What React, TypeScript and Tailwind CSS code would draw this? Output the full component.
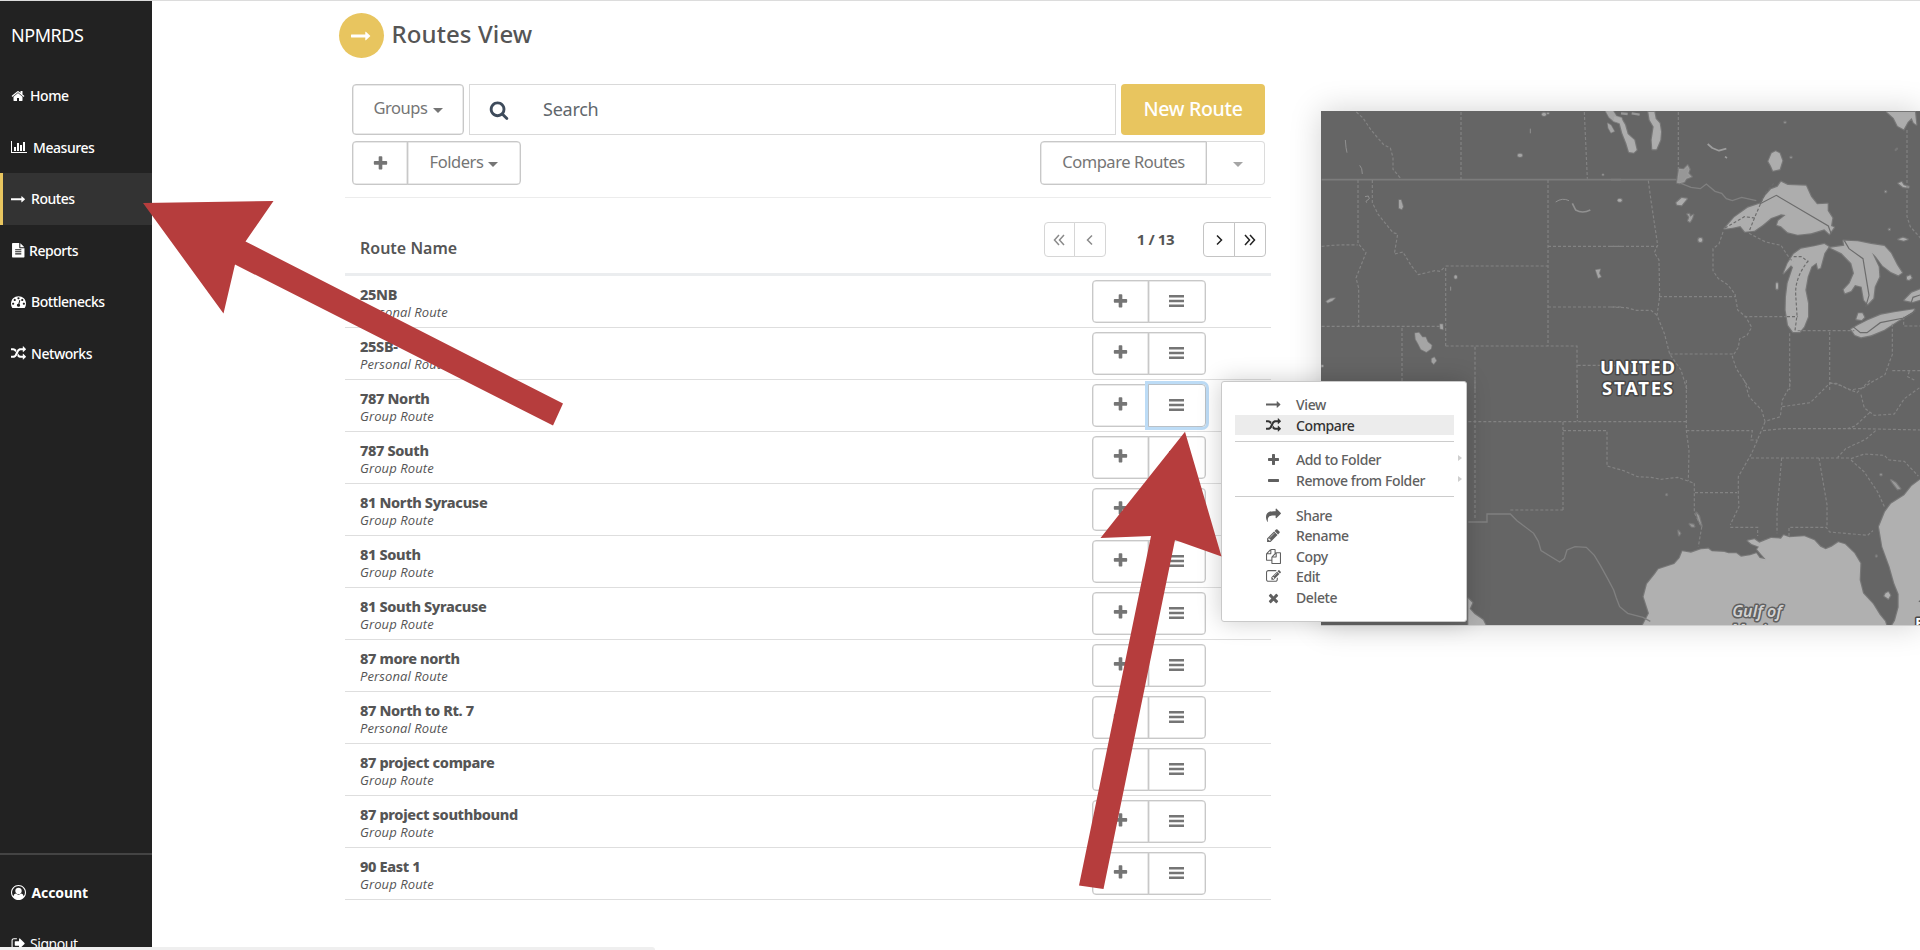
type IconDef = { w: number; d: string };

const ICONS = {
  home: { w: 1792, d: "M1472 992v480q0 26-19 45t-45 19h-384v-384h-256v384h-384q-26 0-45-19t-19-45v-480q0-1 .5-3t.5-3l575-474 575 474q1 2 1 6zm223-69l-62 74q-8 9-21 11h-3q-13 0-21-7l-692-577-692 577q-12 8-24 7-13-2-21-11l-62-74q-8-10-7-23.5t11-21.5l719-599q32-26 76-26t76 26l244 204v-195q0-14 9-23t23-9h192q14 0 23 9t9 23v408l219 182q10 8 11 21.5t-7 23.5z" },
  chart: { w: 2048, d: "M640 896v512h-256v-512h256zm384-512v1024h-256v-1024h256zm1024 1152v128h-2048v-1536h128v1408h1920zm-640-896v768h-256v-768h256zm384-384v1152h-256v-1152h256z" },
  arrow: { w: 1792, d: "M1728 893q0 14-10 24l-384 354q-16 14-35 6-19-9-19-29v-224h-1248q-14 0-23-9t-9-23v-192q0-14 9-23t23-9h1248v-224q0-21 19-29t35 5l384 350q10 10 10 23z" },
  file: { w: 1792, d: "M1596 476q14 14 28 36h-472v-472q22 14 36 28zm-476 164h544v1056q0 40-28 68t-68 28h-1344q-40 0-68-28t-28-68v-1600q0-40 28-68t68-28h800v544q0 40 28 68t68 28zm160 736v-64q0-14-9-23t-23-9h-704q-14 0-23 9t-9 23v64q0 14 9 23t23 9h704q14 0 23-9t9-23zm0-256v-64q0-14-9-23t-23-9h-704q-14 0-23 9t-9 23v64q0 14 9 23t23 9h704q14 0 23-9t9-23zm0-256v-64q0-14-9-23t-23-9h-704q-14 0-23 9t-9 23v64q0 14 9 23t23 9h704q14 0 23-9t9-23z" },
  gauge: { w: 1792, d: "M384 1152q0-53-37.5-90.5t-90.5-37.5-90.5 37.5-37.5 90.5 37.5 90.5 90.5 37.5 90.5-37.5 37.5-90.5zm192-448q0-53-37.5-90.5t-90.5-37.5-90.5 37.5-37.5 90.5 37.5 90.5 90.5 37.5 90.5-37.5 37.5-90.5zm428 481l101-382q6-26-7.5-48.5t-38.5-29.5-48 6.5-30 39.5l-101 382q-60 5-107 43.5t-63 98.5q-20 77 20 146t117 89 146-20 89-117q16-60-6-117t-72-91zm660-33q0-53-37.5-90.5t-90.5-37.5-90.5 37.5-37.5 90.5 37.5 90.5 90.5 37.5 90.5-37.5 37.5-90.5zm-640-640q0-53-37.5-90.5t-90.5-37.5-90.5 37.5-37.5 90.5 37.5 90.5 90.5 37.5 90.5-37.5 37.5-90.5zm448 192q0-53-37.5-90.5t-90.5-37.5-90.5 37.5-37.5 90.5 37.5 90.5 90.5 37.5 90.5-37.5 37.5-90.5zm320 448q0 261-141 483-19 29-54 29h-1402q-35 0-54-29-141-221-141-483 0-182 71-348t191-286 286-191 348-71 348 71 286 191 191 286 71 348z" },
  shuffle: { w: 1792, d: "M666 481q-60 92-137 273-22-45-37-72.5t-40.5-63.5-51-56.5-63-35-81.5-14.5h-224q-14 0-23-9t-9-23v-192q0-14 9-23t23-9h224q250 0 410 225zm1126 799q0 14-9 23l-320 320q-9 9-23 9-13 0-22.5-9.5t-9.5-22.5v-192q-32 0-85 .5t-81 1-73-1-71-5-64-10.5-63-18.5-58-28.5-59-40-55-53.5-56-69.5q59-93 136-273 22 45 37 72.5t40.5 63.5 51 56.5 63 35 81.5 14.5h256v-192q0-14 9-23t23-9q12 0 24 10l319 319q9 9 9 23zm0-896q0 14-9 23l-320 320q-9 9-23 9-13 0-22.5-9.5t-9.5-22.5v-192h-256q-48 0-87 15t-69 45-51 61.5-45 77.5q-32 62-78 171-29 66-49.5 111t-54 105-64 100-74 83-90 68.5-106.5 42-128 16.5h-224q-14 0-23-9t-9-23v-192q0-14 9-23t23-9h224q48 0 87-15t69-45 51-61.5 45-77.5q32-62 78-171 29-66 49.5-111t54-105 64-100 74-83 90-68.5 106.5-42 128-16.5h256v-192q0-14 9-23t23-9q12 0 24 10l319 319q9 9 9 23z" },
  search: { w: 1792, d: "M1216 832q0-185-131.5-316.5t-316.5-131.5-316.5 131.5-131.5 316.5 131.5 316.5 316.5 131.5 316.5-131.5 131.5-316.5zm512 832q0 52-38 90t-90 38q-54 0-90-38l-343-342q-179 124-399 124-143 0-273.5-55.5t-225-150-150-225-55.5-273.5 55.5-273.5 150-225 225-150 273.5-55.5 273.5 55.5 225 150 150 225 55.5 273.5q0 220-124 399l343 343q37 37 37 90z" },
  plus: { w: 1792, d: "M1600 736v192q0 40-28 68t-68 28h-416v416q0 40-28 68t-68 28h-192q-40 0-68-28t-28-68v-416h-416q-40 0-68-28t-28-68v-192q0-40 28-68t68-28h416v-416q0-40 28-68t68-28h192q40 0 68 28t28 68v416h416q40 0 68 28t28 68z" },
  minus: { w: 1792, d: "M1600 736v192q0 40-28 68t-68 28h-1216q-40 0-68-28t-28-68v-192q0-40 28-68t68-28h1216q40 0 68 28t28 68z" },
  share: { w: 1792, d: "M1792 640q0 26-19 45l-512 512q-19 19-45 19t-45-19-19-45v-256h-224q-98 0-175.5 6t-154 21.5-133 42.5-105.5 69.5-80 101-48.5 138.5-17.5 181q0 55 5 123 0 6 2.5 23.5t2.5 26.5q0 15-8.5 25t-23.5 10q-16 0-28-17-7-9-13-22t-13.5-30-10.5-24q-127-285-127-451 0-199 53-333 162-403 875-403h224v-256q0-26 19-45t45-19 45 19l512 512q19 19 19 45z" },
  pencil: { w: 1792, d: "M491 1536l91-91-235-235-91 91v107h128v128h107zm523-928q0-22-22-22-10 0-17 7l-542 542q-7 7-7 17 0 22 22 22 10 0 17-7l542-542q7-7 7-17zm-54-192l416 416-832 832h-416v-416zm683 96q0 53-37 90l-166 166-416-416 166-165q36-38 90-38 53 0 91 38l235 234q37 39 37 91z" },
  copy: { w: 1792, d: "M1696 384q40 0 68 28t28 68v1216q0 40-28 68t-68 28h-960q-40 0-68-28t-28-68v-288h-544q-40 0-68-28t-28-68v-672q0-40 20-88t48-76l408-408q28-28 76-48t88-20h416q40 0 68 28t28 68v328q68-40 128-40h416zm-544 213l-299 299h299v-299zm-640-384l-299 299h299v-299zm196 647l316-316v-416h-384v416q0 40-28 68t-68 28h-416v640h512v-256q0-40 20-88t48-76zm956 804v-1152h-384v416q0 40-28 68t-68 28h-416v640h896z" },
  edit: { w: 1792, d: "M888 1184l116-116-152-152-116 116v56h96v96h56zm440-720q-16-16-33 1l-350 350q-17 17-1 33t33-1l350-350q17-17 1-33zm80 594v190q0 119-84.5 203.5t-203.5 84.5h-832q-119 0-203.5-84.5t-84.5-203.5v-832q0-119 84.5-203.5t203.5-84.5h832q63 0 117 25 15 7 18 23 3 17-9 29l-49 49q-14 14-32 8-23-6-45-6h-832q-66 0-113 47t-47 113v832q0 66 47 113t113 47h832q66 0 113-47t47-113v-126q0-13 9-22l64-64q15-15 35-7t20 29zm-96-738l288 288-672 672h-288v-288zm444 132l-92 92-288-288 92-92q28-28 68-28t68 28l152 152q28 28 28 68t-28 68z" },
  times: { w: 1792, d: "M1490 1322q0 40-28 68l-136 136q-28 28-68 28t-68-28l-294-294-294 294q-28 28-68 28t-68-28l-136-136q-28-28-28-68t28-68l294-294-294-294q-28-28-28-68t28-68l136-136q28-28 68-28t68 28l294 294 294-294q28-28 68-28t68 28l136 136q28 28 28 68t-28 68l-294 294 294 294q28 28 28 68z" },
  user: { w: 1792, d: "M896 0q182 0 348 71t286 191 191 286 71 348q0 181-70.5 347t-190.5 286-286 191.5-349 71.5-349-71-285.5-191.5-190.5-286-71-347.5 71-348 191-286 286-191 348-71zm619 1351q149-205 149-455 0-156-61-298t-164-245-245-164-298-61-298 61-245 164-164 245-61 298q0 250 149 455 66-327 306-327 131 128 313 128t313-128q240 0 306 327zm-235-647q0-159-112.5-271.5t-271.5-112.5-271.5 112.5-112.5 271.5 112.5 271.5 271.5 112.5 271.5-112.5 112.5-271.5z" },
  signout: { w: 1792, d: "M704 1440q0 4 1 20t.5 26.5-3 23.5-10 19.5-20.5 6.5h-320q-119 0-203.5-84.5t-84.5-203.5v-704q0-119 84.5-203.5t203.5-84.5h320q13 0 22.5 9.5t9.5 22.5q0 4 1 20t.5 26.5-3 23.5-10 19.5-20.5 6.5h-320q-66 0-113 47t-47 113v704q0 66 47 113t113 47h312l11.5 1 11.5 3 8 5.5 7 9 2 13.5zm928-544q0 26-19 45l-544 544q-19 19-45 19t-45-19-19-45v-288h-448q-26 0-45-19t-19-45v-384q0-26 19-45t45-19h448v-288q0-26 19-45t45-19 45 19l544 544q19 19 19 45z" },
} satisfies Record<string, IconDef>;

type IconName = keyof typeof ICONS;

function Icon({ name, className }: { name: IconName; className: string }) {
  const { w, d } = ICONS[name];
  return (
    <svg viewBox={`0 0 ${w} 1792`} className={`shrink-0 fill-current ${className}`}>
      <path d={d} />
    </svg>
  );
}

function Caret({ className }: { className: string }) {
  return (
    <svg viewBox="0 0 10 5" className={`h-[5px] w-[10px] shrink-0 fill-current ${className}`}>
      <path d="M0 0h10L5 5z" />
    </svg>
  );
}

function Chevron({ d }: { d: string }) {
  return (
    <svg viewBox="0 0 12 12" className="h-3 w-3 fill-none stroke-current stroke-[1.5]">
      <path d={d} />
    </svg>
  );
}

type Nav = { icon: IconName; label: string; size: string; gap: string; active?: boolean };

const NAV: Nav[] = [
  { icon: "home", label: "Home", size: "w-[14px] h-[14px]", gap: "gap-[5px]" },
  { icon: "chart", label: "Measures", size: "w-[16px] h-[14px]", gap: "gap-[6px]" },
  { icon: "arrow", label: "Routes", size: "w-[14.5px] h-[14.5px]", gap: "gap-[5.5px]", active: true },
  { icon: "file", label: "Reports", size: "w-[14.5px] h-[14.5px]", gap: "gap-[3.5px]" },
  { icon: "gauge", label: "Bottlenecks", size: "w-[15px] h-[15px]", gap: "gap-[5px]" },
  { icon: "shuffle", label: "Networks", size: "w-[15px] h-[15px]", gap: "gap-[5px]" },
];

const ROUTES = [
  ["25NB", "Personal Route"],
  ["25SB-", "Personal Route"],
  ["787 North", "Group Route"],
  ["787 South", "Group Route"],
  ["81 North Syracuse", "Group Route"],
  ["81 South", "Group Route"],
  ["81 South Syracuse", "Group Route"],
  ["87 more north", "Personal Route"],
  ["87 North to Rt. 7", "Personal Route"],
  ["87 project compare", "Group Route"],
  ["87 project southbound", "Group Route"],
  ["90 East 1", "Group Route"],
];

type MenuEntry = { icon: IconName; label: string; active?: boolean; sub?: boolean };

const MENU: MenuEntry[][] = [
  [
    { icon: "arrow", label: "View" },
    { icon: "shuffle", label: "Compare", active: true },
  ],
  [
    { icon: "plus", label: "Add to Folder", sub: true },
    { icon: "minus", label: "Remove from Folder", sub: true },
  ],
  [
    { icon: "share", label: "Share" },
    { icon: "pencil", label: "Rename" },
    { icon: "copy", label: "Copy" },
    { icon: "edit", label: "Edit" },
    { icon: "times", label: "Delete" },
  ],
];

function Sidebar() {
  return (
    <aside className="flex h-[947px] w-[152px] shrink-0 flex-col overflow-hidden bg-[#222] text-[14px] font-medium tracking-[-0.45px] text-white">
      <div className="flex h-[69px] items-center pl-[11px] text-[18px] font-normal">NPMRDS</div>
      <nav className="flex flex-col">
        {NAV.map((n) => (
          <a
            key={n.label}
            className={
              n.active
                ? `flex h-[51.5px] items-center border-l-[3px] border-[#e8c55f] bg-[#333] pl-[8px] ${n.gap}`
                : `flex h-[51.5px] items-center pl-[11px] ${n.gap}`
            }
          >
            <Icon name={n.icon} className={n.size} />
            <span>{n.label}</span>
          </a>
        ))}
      </nav>
      <div className="mt-auto h-[95px] shrink-0 border-t-2 border-[#444]">
        <a className="flex h-[75px] items-center gap-[5.5px] pl-[11px] font-bold tracking-[-0.1px]">
          <Icon name="user" className="h-[15px] w-[15px]" />
          <span>Account</span>
        </a>
        <a className="flex h-[26px] items-center gap-[4px] pl-[11px] font-normal">
          <Icon name="signout" className="h-[15px] w-[15px]" />
          <span>Signout</span>
        </a>
      </div>
    </aside>
  );
}

const halfLeft = "flex h-full items-center justify-center rounded-l-[4px] border border-[#c8c8c8] shadow-[inset_0_0_0_0.5px_#d4d4d4] text-[#757575]";
const halfRight = "-ml-px flex h-full items-center justify-center rounded-r-[4px] border border-[#c8c8c8] shadow-[inset_0_0_0_0.5px_#d4d4d4] text-[#757575]";

function Toolbar() {
  return (
    <div className="flex flex-col gap-[6px] pr-[6px] pl-[7px] text-[16.5px] tracking-[-0.45px] text-[#757575]">
      <div className="flex h-[51px]">
        <button className="flex w-[112px] items-center justify-center gap-[5px] rounded-[4px] border border-[#c8c8c8] pb-[2px] shadow-[inset_0_0_0_0.5px_#d4d4d4]">
          Groups <Caret className="mt-[4px]" />
        </button>
        <div className="ml-[5px] flex w-[647px] items-center border border-[#d9d9d9] pb-[1px] pl-[19px] text-[18px] tracking-[-0.25px] text-[#5f676c]">
          <Icon name="search" className="mt-[2px] h-[20px] w-[20px] text-[#3e4b5b]" />
          <span className="ml-[34px]">Search</span>
        </div>
        <button className="ml-[5px] flex w-[144px] items-center justify-center rounded-[4px] bg-[#e8c55f] pb-[2px] text-[19.5px] font-medium tracking-[-0.3px] text-white">
          New Route
        </button>
      </div>
      <div className="flex h-[44px] justify-between">
        <div className="flex">
          <button className={`w-[56px] ${halfLeft}`}>
            <Icon name="plus" className="h-[17px] w-[17px]" />
          </button>
          <button className={`w-[114px] gap-[5px] pb-[2px] ${halfRight}`}>
            Folders <Caret className="mt-[4px]" />
          </button>
        </div>
        <div className="flex">
          <button className={`w-[167px] pb-[2px] ${halfLeft}`}>Compare Routes</button>
          <button className="flex h-full w-[58px] items-center justify-center rounded-r-[4px] border border-l-0 border-[#dcdcdc] text-[#a5a5a5]">
            <Caret className="mt-[2px] ml-1" />
          </button>
        </div>
      </div>
    </div>
  );
}

function Pager() {
  return (
    <div className="flex h-[35px] items-center">
      <div className="flex h-full text-[#8a8a8a]">
        <span className="flex w-[31.5px] items-center justify-center rounded-l-[4px] border border-[#d6d6d6]">
          <Chevron d="M6 1L1.500 6L6 11M11 1L6.500 6L11 11" />
        </span>
        <span className="-ml-px flex w-[32px] items-center justify-center rounded-r-[4px] border border-[#d6d6d6]">
          <Chevron d="M8 1.500L3.500 6L8 10.500" />
        </span>
      </div>
      <span className="w-[97px] pl-[2px] text-center text-[15px] font-bold tracking-[-0.4px] text-[#555]">1 / 13</span>
      <div className="flex h-full text-[#222]">
        <span className="flex w-[32px] items-center justify-center rounded-l-[4px] border border-[#c4c4c4]">
          <Chevron d="M4 1.500L8.500 6L4 10.500" />
        </span>
        <span className="-ml-px flex w-[32px] items-center justify-center rounded-r-[4px] border border-[#c4c4c4]">
          <Chevron d="M1 1L5.500 6L1 11M6 1L10.500 6L6 11" />
        </span>
      </div>
    </div>
  );
}

function RouteTable() {
  return (
    <div className="mt-[12px] border-t border-[#ececec]">
      <div className="flex h-[78px] items-start justify-between border-b-[3px] border-[#ebedef] pt-[24px] pr-[5px] pl-[15px]">
        <span className="mt-[14px] text-[16px] leading-[24px] font-semibold text-[#555]">Route Name</span>
        <Pager />
      </div>
      {ROUTES.map(([name, kind], i) => (
        <div key={name} className="flex h-[51.970px] items-start justify-between border-b border-[#dedede] pr-[65px] pl-[15px]">
          <div className="pt-[9px]">
            <div className="text-[14.500px] leading-[19px] font-extrabold tracking-[-0.35px] text-[#555]">{name}</div>
            <div className="font-['Open_Sans',sans-serif] text-[13px] leading-[16px] tracking-[0.1px] text-[#555] italic">{kind}</div>
          </div>
          <div className="flex h-[43px] translate-y-[4px]">
            <button className={`w-[57px] pb-[1px] ${halfLeft}`}>
              <Icon name="plus" className="h-[17px] w-[17px]" />
            </button>
            <button
              className={
                i === 2
                  ? "-ml-px flex h-full w-[58px] items-center justify-center rounded-r-[4px] border border-[#b9c0c6] pr-[2px] pb-[1px] text-[#757575] shadow-[0_0_0_3px_#bddcf6]"
                  : `w-[58px] pr-[2px] pb-[1px] ${halfRight}`
              }
            >
              <svg viewBox="0 0 15 12" className="h-[12px] w-[15px] fill-current">
                <path d="M0 0h15v2.400H0zM0 4.800h15v2.400H0zM0 9.600h15v2.400H0z" />
              </svg>
            </button>
          </div>
        </div>
      ))}
    </div>
  );
}

function ContextMenu() {
  return (
    <div className="absolute top-[380px] left-[1221px] h-[241px] w-[245.5px] rounded-[3px] border border-[#c9c9c9] bg-white pt-[12px] pr-[12px] pl-[13px] text-[14px] font-medium tracking-[-0.38px] text-[#606060] shadow-[0_0_24px_rgba(0,0,0,0.2)]">
      {MENU.map((group, g) => (
        <div key={g} className={g === 0 ? "" : "mt-[6px] border-t-[1.500px] border-[#ccc] pt-[7px]"}>
          {group.map((m) => (
            <div
              key={m.label}
              className={
                m.active
                  ? "flex h-[20.600px] items-center bg-[#ececec] pt-[1px] pl-[31px] text-[#333]"
                  : "relative flex h-[20.600px] items-center pt-[1px] pl-[31px]"
              }
            >
              <Icon name={m.icon} className={m.icon === "plus" || m.icon === "minus" || m.icon === "times" ? "h-[14px] w-[15px]" : "h-[15px] w-[15px]"} />
              <span className="ml-[15px]">{m.label}</span>
              {m.sub && (
                <svg viewBox="0 0 4 6" className="absolute top-[6px] -right-[8px] h-[6px] w-[4px] fill-[#cfcfcf]">
                  <path d="M0 0L4 3L0 6z" />
                </svg>
              )}
            </div>
          ))}
        </div>
      ))}
    </div>
  );
}

function RouteMap() {
  return (
    <div className="mt-[110px] ml-[49.500px] h-[515px] w-[600px] shrink-0 shadow-[0_0_30px_rgba(0,0,0,0.18)]">
      <svg viewBox="0 0 600 515" className="h-[515px] w-[600px] bg-[#656565]">
        <g transform="translate(-10 -21) scale(.33333)">
          <g fill="#a5a5a5" stroke="#a5a5a5" strokeOpacity=".3" strokeWidth="5" strokeLinejoin="round">
            <path d="M312 730l12-2 10 14 10 0 6 14 12 10-2 10-14 10-16-8-8-16-8-14z" />
            <path d="M362 806l8-4 6 10-8 10-6-6z" />
            <ellipse cx="627" cy="196" rx="7" ry="5" />
            <ellipse cx="699" cy="73" rx="6" ry="5" />
            <ellipse cx="711" cy="70" rx="3" ry="2" />
            <ellipse cx="434" cy="561" rx="4" ry="5" />
            <path d="M264 330l6 0 6 20-4 8-8-4z" />
            <path d="M854 540l14-2-4 12 6 10-8 4-4-12z" />
            <path d="M46 634l12-8 14-2-8 8-14 6z" />
            <path d="M387 703l8 0 1 15-8-2z" />
            <circle cx="876" cy="254" r="2" />
            <circle cx="924" cy="331" r="4" />
            <path d="M884 64l10 18 14 12 24 6v-16l-16-6-10-16zM890 100l10 6 10 18-10 4-8-14z" />
            <circle cx="34" cy="828" r="3" />
          </g>
          <g fill="none" stroke="#919191" strokeWidth="3">
            <path d="M103 150l2 22 3 16M146 226l6 10 2 16M162 320l10-2 3 8-10 8 2 4M658 116v14M734 336q20-14 40-4M419 590v12" />
            <path d="M784 340l10 20q20 12 44 0" strokeWidth="5" />
          </g>
          <path d="M32 269H930" stroke="#7c7c7c" strokeWidth="5" />
          <g fill="none" stroke="#838383" strokeWidth="3.500" strokeDasharray="9 6">
            <path d="M136 66l20 18 24 36 38 44 20 10 8 28 0 36 22 26" />
            <path d="M450 66V269M820 66l9 200M141 270V460l24 28-30 76 8 30V708M184 270v68l18 36 44 54 14 4-10 60 26-6 24 40 22 28 50-12 16 2 14-14" />
            <path d="M32 469q50-6 108-4M32 709H390M404 768V528H711M711 270V768M404 768H798V900M711 469H930M711 651H930M273 714V900M492 770V900M800 826H930" />
          </g>
        </g>

        <g transform="translate(290 -21) scale(.33333)">
          <g fill="#adadad" stroke="#adadad" strokeOpacity=".25" strokeWidth="7" strokeLinejoin="round">
            <path d="M10 80L30 84L42 104L50 132L70 150L77 180L68 188L54 186L46 160L34 130L26 100L8 92z" />
            <path d="M112 66L130 66L134 86L146 100L150 125L148 150L136 178L124 178L122 150L128 110L116 90z" />
            <path d="M30 70L50 72M62 70L86 74" fill="none" strokeOpacity=".7" />
            <path d="M200 262l4-26 14 2 12-12 6 12-4 12 10 10-16 6-6 10-14 4-8-2z" fillOpacity=".7" />
            <path d="M196 338l16-14 16 2-10 12-6 8-14-2z" />
            <path d="M229 372l6 0 2 8 10-6-4 12-6 10-6-4 4-10z" fillOpacity=".8" />
            <circle cx="268" cy="450" r="6" />
            <circle cx="28" cy="331" r="4" />
            <path d="M472 214L482 190L494 184L506 190L514 212L506 238L486 242L480 228z" />
            <path d="M290 162l14 12 20 8 22-6M342 200l6 4" fill="none" strokeOpacity=".8" strokeWidth="5" />
            <path d="M340 416L370 382L410 353L450 340L462 318L480 298L500 290L510 275L530 285L585 287L600 320L618 343L650 341L650 362L664 384L660 408L669 412L655 432L640 418L600 430L560 434L530 427L510 409L498 405L502 392L524 375L510 373L480 384L455 405L430 422L402 425L388 408L365 413z" />
            <path d="M518 550L530 520L548 492L570 476L610 469L640 462L653 470L640 490L628 534L621 536L617 518L601 530L590 560L583 600L591 640L591 680L579 710L566 726L546 726L531 705L524 660L525 620L530 580L546 532L540 526z" />
            <path d="M658 473L700 467L697 452L740 454L780 462L820 468L840 490L858 525L873 548L862 556L840 546L815 527L795 500L783 488L803 530L805 560L791 590L787 625L770 643L759 630L752 590L732 585L720 603L702 610L698 599L716 580L729 550L721 520L692 490z" />
            <path d="M742 670l12 0 6 12-8 8-16-2zM888 560l10-4 4 8-8 6-6-2z" />
            <path d="M720 718L742 705L770 691L810 674L850 667L910 658L903 668L860 693L820 719L780 736L750 742L732 735z" />
            <path d="M880 631L902 608L932 597L932 628L905 636z" />
            <path d="M828 66L912 66L916 104L908 98L902 84L890 96L878 118L860 108L848 84z" />
            <path d="M862 280l10-4 6 10 16 4-2 3-16-2zM862 448l14-5 14 5-12 4zM854 180l4-4z" />
            <ellipse cx="498" cy="588" rx="3" ry="10" />
            <circle cx="522" cy="97" r="2" />
            <circle cx="540" cy="202" r="2" />
            <circle cx="835" cy="418" r="2" />
            <circle cx="824" cy="305" r="2" />
          </g>
          <path d="M0 269H196" stroke="#7c7c7c" strokeWidth="5" />
          <path d="M210 280l30 12 28 4 18-14 26 22 20 6 14 16 18 6 28-10 44 10" fill="none" stroke="#808080" strokeWidth="4" />
          <g fill="none" stroke="#838383" strokeWidth="3.500" strokeDasharray="9 6">
            <path d="M202 66V240M112 272L120 332L132 412L140 466L130 488L144 510L146 620L138 676L160 730L176 792L210 840L228 900" />
            <path d="M0 469H138M144 620H372M0 651l46 2 30 8 44 0 20 16M176 792H366M336 426L324 462L306 476L306 542L322 566L350 584L372 612L380 660L404 680L422 712L408 736L386 746L382 772L364 800L376 836L418 900M400 680H524M414 430L464 456L510 466L528 494L546 516M560 722H730M536 730V900M656 726V900M656 880l20 0 40 20 40-6 30-20 36-20 14-40 8-20V700M844 842H930M878 680v28H930M888 120V380l10 30 32 36M910 870l-20-10 6-20" />
          </g>
          <g fill="none" stroke="#6c6c6c" strokeWidth="3.500">
            <path d="M446 342L496 316L652 408L660 430M700 452L714 476L756 506L774 616L764 650M726 710L748 728L768 728L808 698L878 684L914 662M900 640l6-18 24-8" />
            <path d="M342 414L400 380L432 384M416 420L432 380L462 310L492 276M592 512Q552 562 554 612L558 676L552 722M528 680h32M548 500l24 0 20 16" strokeDasharray="9 6" />
          </g>
        </g>

        <g transform="translate(140 269) scale(.33333)">
          <g fill="#b0b0b0" stroke="#b0b0b0" strokeOpacity=".25" strokeWidth="7" strokeLinejoin="round">
            <path d="M542 742L564 700L548 650L558 612L582 582L592 568L640 552L656 534L664 514L690 518L720 508L742 506L752 514L790 516L802 520L826 520L840 530L868 526L886 520L896 534L914 538L900 522L888 508L894 500L872 492L860 482L880 478L895 488L930 474L960 476L968 466L985 472L1030 469L1060 481L1078 500L1094 508L1112 500L1132 487L1152 493L1180 520L1198 550L1196 600L1206 640L1236 672L1256 704L1272 724L1278 742z" />
            <path d="M1390 290L1352 318L1330 346L1290 371L1272 396L1254 440L1264 500L1286 560L1300 610L1313 642L1313 682L1302 722L1290 742L1390 742z" />
            <path d="M22 656l12 12-8 18 14 16 26 18 10 20H22z" />
            <path d="M1274 640l8-4 6 10-6 10-12-8z" />
            <path d="M686 432l12 2 2 6-8 0zM706 398l8 10 8 30-10-18zM652 452l6 8-4 6zM1290 300l14 8 14 18-8 2-14-18z" fillOpacity=".6" />
            <circle cx="617" cy="344" r="1.500" />
            <circle cx="1260" cy="284" r="2" />
            <circle cx="1246" cy="528" r="1.500" />
          </g>
          <path d="M1384 656l-12 8 12 6z" fill="#656565" />
          <path d="M22 426h56v-24h70l20 20 50 38 14 24 8 28 56 34 14-10 8-26 24-10 34 2 24 24 18 30 22 40 18 34 8 24 10 26 24 20 46 12 22 12" fill="none" stroke="#808080" strokeWidth="4" />
          <g fill="none" stroke="#838383" strokeWidth="3.500" strokeDasharray="9 6">
            <path d="M42 0V420M349 0V124M22 125H676M676 0V152L684 212L682 302M306 126V390M306 152H438V258L488 272L530 290L570 292L600 298L650 292L700 310M148 390H306M676 152H874l-4 28h20M870 234H1170M700 310V398L722 442L712 500M702 338H828M912 126L902 150L872 220L832 290L832 350L834 380L808 434M808 442H890v26M962 234L948 394V460M1074 234L1098 374V440M984 468V442H1096L1106 456L1220 466L1236 452M906 152L966 146L1200 146L1380 150M850 0L864 50L902 90L912 124L958 110L964 60L986 20L988 0M964 80L1048 68L1108 8L1138 16L1188 38L1228 0M1200 44L1210 84L1240 106L1300 102L1330 56L1380 20M1226 98L1182 138L1160 146M1244 152L1214 178L1154 206L1130 232M1170 236L1210 222L1270 226L1284 240L1330 244L1372 288M1170 240L1210 276L1250 336L1270 380" />
          </g>
        </g>

        <g className="font-['Noto_Sans',sans-serif]" textAnchor="middle" paintOrder="stroke" strokeLinejoin="round">
          <g className="fill-white stroke-[#484848] text-[18.500px] font-bold" strokeWidth="3">
            <text x="316.500" y="262.500" textLength="75">UNITED</text>
            <text x="316.500" y="283.500" textLength="71">STATES</text>
          </g>
          <g className="fill-[#d2d2d2] stroke-[#606060] text-[16px] font-semibold italic" strokeWidth="3">
            <text x="436" y="506">Gulf of</text>
            <text x="436" y="525">Mexico</text>
          </g>
          <text x="599" y="517" className="fill-white stroke-[#484848] text-[14px] font-bold" strokeWidth="3">B</text>
        </g>
        <path d="M0 514.500H600" stroke="#cfcfcf" />
      </svg>
    </div>
  );
}

export default function App() {
  return (
    <div className="relative flex h-[950px] w-[1920px] overflow-hidden border-t border-[#dcdcdc] bg-white font-['Noto_Sans',sans-serif]">
      <Sidebar />
      <main className="flex">
        <section className="ml-[193px] w-[926px]">
          <header className="-ml-[6.500px] flex h-[83px] items-start gap-[8px] pt-[12px]">
            <span className="flex h-[45px] w-[45px] items-center justify-center rounded-full bg-[#e8c55f] text-white">
              <Icon name="arrow" className="h-[20px] w-[20px]" />
            </span>
            <h1 className="text-[24px] leading-[42px] font-medium tracking-[0.1px] text-[#555]">Routes View</h1>
          </header>
          <Toolbar />
          <RouteTable />
        </section>
        <RouteMap />
      </main>

      <ContextMenu />

      <svg viewBox="0 0 1920 950" className="pointer-events-none absolute -top-px left-0 h-[950px] w-[1920px] fill-[#b63d3d]">
        <path d="M143 203L273.500 201L245.500 241.500L563 403.500L553 425.500L235 264.500L223.500 313.500z" />
        <path d="M1185 431.700L1221.500 556.500L1175 540L1103.500 889L1079 885.500L1151 536L1100.500 538z" />
      </svg>

      <div className="absolute bottom-0 left-0 h-[3px] w-[655px] rounded-tr-[4px] bg-[#efefef]" />
    </div>
  );
}
